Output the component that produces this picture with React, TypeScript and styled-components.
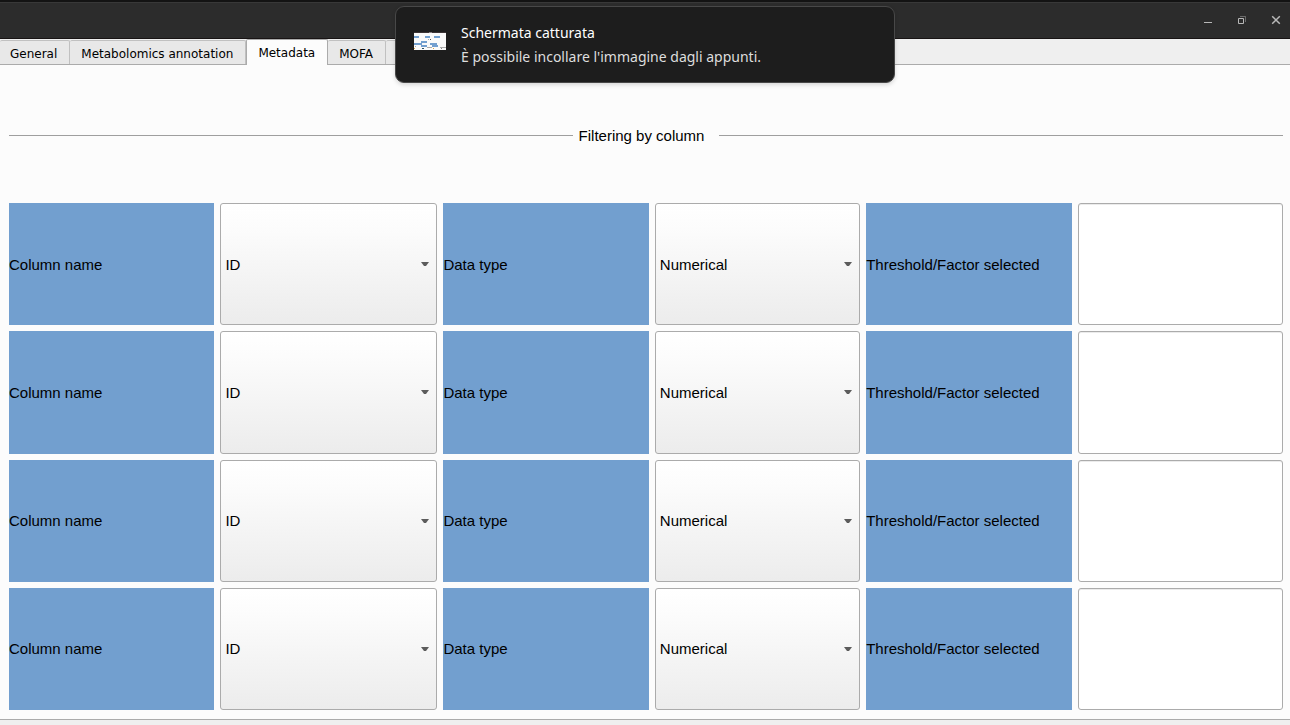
import React, { useId, useState } from "react";
import styled, { createGlobalStyle } from "styled-components";

const GlobalStyle = createGlobalStyle`
  *, *::before, *::after { box-sizing: border-box; }
  body {
    margin: 0;
    background: #efefef;
    color: #000;
    font-family: "Liberation Sans", Arial, sans-serif;
    font-size: 15px;
  }
`;

const Window = styled.div`
  display: flex;
  flex-direction: column;
  min-height: 100vh;
`;

const TitleBar = styled.header`
  display: flex;
  justify-content: flex-end;
  align-items: center;
  gap: 18px;
  height: 39px;
  padding: 0 6px 0 0;
  background: #2c2c2c;
  border-top: 2px solid #131313;
  border-bottom: 1px solid #181414;
  box-shadow: inset 0 1px 0 #383838;
`;

const WindowButton = styled.button`
  display: flex;
  padding: 0;
  border: 0;
  background: none;
  color: #b8b8b8;
`;

const TabBar = styled.div`
  display: flex;
  align-items: flex-end;
  height: 26px;
  border-bottom: 1px solid #ababab;
`;

const Tab = styled.button<{ $active?: boolean }>`
  height: ${(p) => (p.$active ? 26 : 24)}px;
  margin: 0 0 ${(p) => (p.$active ? -1 : 0)}px;
  padding: ${(p) => (p.$active ? 0 : 3)}px 12px 0 11px;
  border: 1px solid ${(p) => (p.$active ? "#ababab" : "#c0c0c0")};
  border-width: ${(p) => (p.$active ? "1px 1px 0" : "1px 1px 0 0")};
  border-radius: 2px 2px 0 0;
  background: ${(p) => (p.$active ? "#fcfcfc" : "#e8e8e8")};
  color: #000;
  font: 12px/20px "DejaVu Sans", sans-serif;
  white-space: nowrap;

  &:first-child { padding-left: 10px; }
`;

const Panel = styled.main`
  flex: 1;
  display: flex;
  flex-direction: column;
  margin-bottom: 5px;
  padding: 0 7px 9px 9px;
  background: #fcfcfc;
  border-bottom: 1px solid #ababab;
`;

const SectionTitle = styled.h2`
  display: flex;
  align-items: center;
  height: 138px;
  margin: 0;
  padding-top: 2px;
  font-size: 15px;
  font-weight: 400;

  &::before, &::after {
    content: "";
    flex: 1;
    height: 1px;
    background: #9f9f9f;
  }
  &::before { margin-right: 6px; }
  &::after { margin-left: 15px; }
`;

const Filters = styled.form`
  flex: 1;
  display: grid;
  grid-auto-rows: 1fr;
  gap: 6px;
`;

const FilterLine = styled.div`
  display: grid;
  grid-template-columns: minmax(0, 1fr) 217px repeat(4, minmax(0, 1fr));
  gap: 6px;
`;

const FieldLabel = styled.label`
  display: flex;
  align-items: center;
  background: #729fcf;
  white-space: nowrap;
`;

const Combo = styled.div`
  display: grid;
  align-items: center;

  > * { grid-area: 1 / 1; }
  > svg {
    justify-self: end;
    margin-right: 8px;
    pointer-events: none;
  }
`;

const ComboSelect = styled.select`
  appearance: none;
  width: 100%;
  height: 100%;
  padding: 0 20px 0 4px;
  border: 1px solid #ababab;
  border-radius: 3px;
  background: linear-gradient(#fff, #fcfcfc 20%, #ececec);
  color: #000;
  font: inherit;
`;

const TextField = styled.input`
  width: 100%;
  min-width: 0;
  padding: 0 4px;
  border: 1px solid #ababab;
  border-radius: 3px;
  background: #fff;
  box-shadow: inset 0 1px 0 #ebebeb;
  font: inherit;
`;

const Toast = styled.aside`
  position: absolute;
  top: 6px;
  left: 50%;
  transform: translateX(-50%);
  display: flex;
  align-items: center;
  gap: 15px;
  width: 500px;
  max-width: 100%;
  height: 77px;
  padding: 0 18px;
  border: 1px solid #484848;
  border-radius: 9px;
  background: #1d1d1d;
  color: #dedede;
  box-shadow: 0 2px 4px rgba(0, 0, 0, 0.15);
  font: 14px/24px "Noto Sans", sans-serif;

  > svg { margin-bottom: 7px; }
`;

const ToastText = styled.p`
  margin: 0;
`;

const ToastTitle = styled.strong`
  display: block;
  color: #fff;
  font-weight: 400;
`;

function ComboBox({ id, options }: { id: string; options: string[] }) {
  return (
    <Combo>
      <ComboSelect id={id}>
        {options.map((o) => (
          <option key={o}>{o}</option>
        ))}
      </ComboSelect>
      <svg width="8" height="4" viewBox="0 0 8 4" aria-hidden="true">
        <path d="M0 0H8L5 4H3Z" fill="#5c5c5c" />
      </svg>
    </Combo>
  );
}

function FilterRow() {
  const id = useId();
  return (
    <FilterLine>
      <FieldLabel htmlFor={`${id}-column`}>Column name</FieldLabel>
      <ComboBox id={`${id}-column`} options={["ID"]} />
      <FieldLabel htmlFor={`${id}-type`}>Data type</FieldLabel>
      <ComboBox id={`${id}-type`} options={["Numerical"]} />
      <FieldLabel htmlFor={`${id}-value`}>Threshold/Factor selected</FieldLabel>
      <TextField id={`${id}-value`} type="text" />
    </FilterLine>
  );
}

function Thumbnail() {
  return (
    <svg width="32" height="18" viewBox="0 0 33 18" preserveAspectRatio="none" shapeRendering="crispEdges" aria-hidden="true">
      <rect width="33" height="18" fill="#fafafa" />
      <rect width="33" height="1" fill="#3a3234" />
      <path d="M15 0h4v1h-4z" fill="#8a8285" />
      <path d="M0 4h5v2H0zM11 4h5v2h-5zM21 4h6v2h-6zM7 9h6v2H7zM0 11h8v2H0zM16 11h8v2h-8zM7 13h6v2H7zM19 13h6v2h-6z" fill="#729fcf" />
      <path d="M16 7h2v1h-2z" fill="#555" />
      <path d="M14 7h1v1h-1zM13 15h6v1h-6zM27 15h6v1h-6zM1 14h1v1H1z" fill="#aaa" />
      <path d="M0 16h1v1H0zM20 16h1v1h-1z" fill="#e0a33c" />
      <path d="M8 16h2v1H8zM16 16h1v1h-1z" fill="#2e5266" />
      <path d="M28 16h1v1h-1z" fill="#888" />
    </svg>
  );
}

const tabs = ["General", "Metabolomics annotation", "Metadata", "MOFA"];

export default function App() {
  const [active, setActive] = useState("Metadata");
  return (
    <Window>
      <GlobalStyle />
      <TitleBar>
        <WindowButton aria-label="Minimize">
          <svg width="16" height="16" viewBox="0 0 16 16" fill="currentColor">
            <path d="M4 10h8v1H4z" />
          </svg>
        </WindowButton>
        <WindowButton aria-label="Restore">
          <svg width="16" height="16" viewBox="0 0 16 16" fill="none" stroke="currentColor">
            <path d="M4.500 6.500h5v5h-5z" />
            <path d="M6 4.500h5.500V10" opacity="0.45" />
          </svg>
        </WindowButton>
        <WindowButton aria-label="Close">
          <svg width="16" height="16" viewBox="0 0 16 16" fill="none" stroke="currentColor" strokeWidth="1.500">
            <path d="M4.200 4.200l7.600 7.600M11.800 4.200l-7.600 7.600" />
          </svg>
        </WindowButton>
      </TitleBar>
      <TabBar role="tablist">
        {tabs.map((t) => (
          <Tab key={t} role="tab" aria-selected={t === active} $active={t === active} onClick={() => setActive(t)}>
            {t}
          </Tab>
        ))}
        <Tab role="tab" aria-label="More" aria-selected={false} />
      </TabBar>
      <Panel>
        <SectionTitle>Filtering by column</SectionTitle>
        <Filters>
          <FilterRow />
          <FilterRow />
          <FilterRow />
          <FilterRow />
        </Filters>
      </Panel>
      <Toast role="status">
        <Thumbnail />
        <ToastText>
          <ToastTitle>Schermata catturata</ToastTitle>
          È possibile incollare l'immagine dagli appunti.
        </ToastText>
      </Toast>
    </Window>
  );
}
